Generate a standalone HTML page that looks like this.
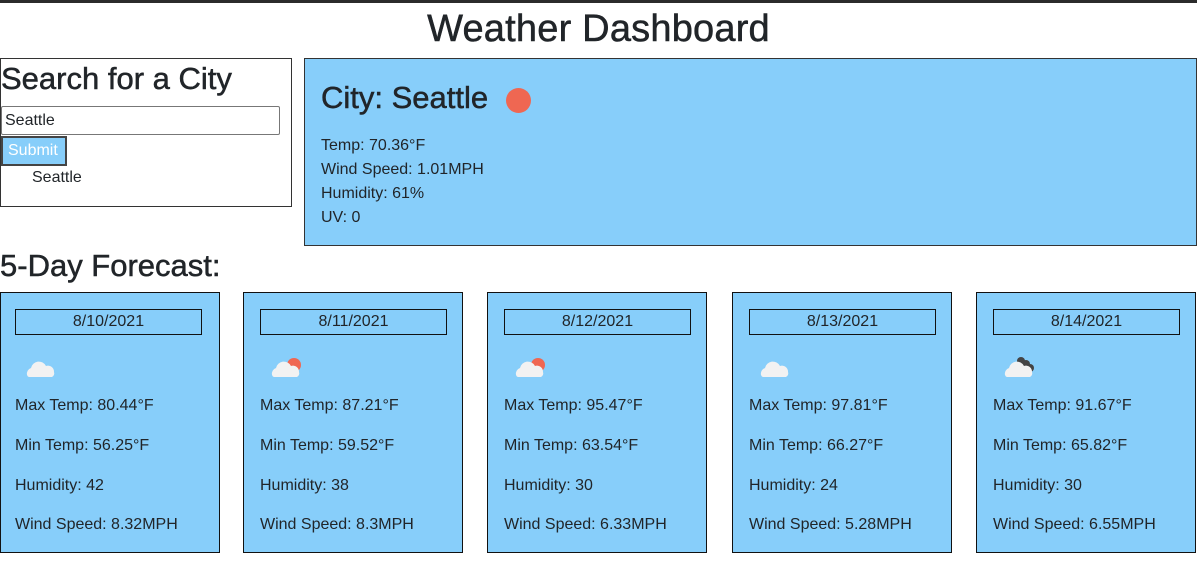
<!DOCTYPE html>
<html><head><style>
*{box-sizing:border-box;margin:0;padding:0}
body{width:1197px;height:561px;overflow:hidden;background:#fff;font-family:"Liberation Sans",Arial,sans-serif;color:#212529;position:relative}
.abs{position:absolute}
.topb{position:absolute;left:0;top:0;width:1197px;height:3px;background:#2b2b2b}
h1,h2,.fh{-webkit-text-stroke:0.5px #212529}
h1{position:absolute;left:0;width:1197px;top:7px;text-align:center;font-size:38px;font-weight:500;line-height:44px;letter-spacing:0.2px}
.search{left:0;top:58px;width:292px;height:149px;border:1px solid #333}
.search h2{font-size:31px;font-weight:500;line-height:40px;margin-top:0}
.inp{position:absolute;left:0;top:47px;width:279px;height:29px;border:1px solid #777;border-radius:2px;font-size:16px;padding:5px 3px}
.btn{position:absolute;left:0;top:77px;width:66px;height:30px;background:#87cefa;color:#fff;border:2px solid #444;font-size:16px;padding:4px 5px}
.hist{position:absolute;left:31px;top:110px;font-size:16px}
.cur{left:304px;top:58px;width:893px;height:188px;background:#87cefa;border:1px solid #333}
.cur h2{position:absolute;left:16px;top:21px;font-size:31px;font-weight:500}
.sun{position:absolute;left:201px;top:29px;width:25px;height:25px;border-radius:50%;background:#ef6752}
.cur .t{position:absolute;left:16px;top:75px;font-size:16px;line-height:24px}
.fh{left:0;top:248px;font-size:31px;font-weight:500}
.card{top:292px;width:220px;height:261px;background:#87cefa;border:1px solid #111;font-size:16px}
.date{position:absolute;left:14px;top:16px;width:187px;height:26px;border:1px solid #111;text-align:center;line-height:24px}
.ic{position:absolute;left:22px;top:60px}
.l{position:absolute;left:14px}
</style></head><body>
<div class="topb"></div>
<h1>Weather Dashboard</h1>
<div class="abs search"><h2>Search for a City</h2><div class="inp">Seattle</div><div class="btn">Submit</div><div class="hist">Seattle</div></div>
<div class="abs cur"><h2>City: Seattle</h2><div class="sun"></div><div class="t">Temp: 70.36°F<br>Wind Speed: 1.01MPH<br>Humidity: 61%<br>UV: 0</div></div>
<div class="abs fh">5-Day Forecast:</div>

<div class="abs card" style="left:0"><div class="date">8/10/2021</div>
<svg class="ic" width="40" height="28"><path d="M4 22a6 6 0 0 1 4-7a8 8 0 0 1 15-2a6 6 0 0 1 8 6a4 4 0 0 1-2 5H6a3 3 0 0 1-2-2z" fill="#f2f2f2"/></svg>
<div class="l" style="top:104px">Max Temp: 80.44°F</div><div class="l" style="top:144px">Min Temp: 56.25°F</div><div class="l" style="top:184px">Humidity: 42</div><div class="l" style="top:223px">Wind Speed: 8.32MPH</div></div>

<div class="abs card" style="left:243px"><div class="date" style="left:16px">8/11/2021</div>
<svg class="ic" width="40" height="28" style="left:24px"><circle cx="26" cy="12" r="7" fill="#ef6752"/><path d="M4 22a6 6 0 0 1 4-7a8 8 0 0 1 15-2a6 6 0 0 1 8 6a4 4 0 0 1-2 5H6a3 3 0 0 1-2-2z" fill="#f2f2f2"/></svg>
<div class="l" style="top:104px;left:16px">Max Temp: 87.21°F</div><div class="l" style="top:144px;left:16px">Min Temp: 59.52°F</div><div class="l" style="top:184px;left:16px">Humidity: 38</div><div class="l" style="top:223px;left:16px">Wind Speed: 8.3MPH</div></div>

<div class="abs card" style="left:487px"><div class="date" style="left:16px">8/12/2021</div>
<svg class="ic" width="40" height="28" style="left:24px"><circle cx="26" cy="12" r="7" fill="#ef6752"/><path d="M4 22a6 6 0 0 1 4-7a8 8 0 0 1 15-2a6 6 0 0 1 8 6a4 4 0 0 1-2 5H6a3 3 0 0 1-2-2z" fill="#f2f2f2"/></svg>
<div class="l" style="top:104px;left:16px">Max Temp: 95.47°F</div><div class="l" style="top:144px;left:16px">Min Temp: 63.54°F</div><div class="l" style="top:184px;left:16px">Humidity: 30</div><div class="l" style="top:223px;left:16px">Wind Speed: 6.33MPH</div></div>

<div class="abs card" style="left:732px"><div class="date" style="left:16px">8/13/2021</div>
<svg class="ic" width="40" height="28" style="left:24px"><path d="M4 22a6 6 0 0 1 4-7a8 8 0 0 1 15-2a6 6 0 0 1 8 6a4 4 0 0 1-2 5H6a3 3 0 0 1-2-2z" fill="#f2f2f2"/></svg>
<div class="l" style="top:104px;left:16px">Max Temp: 97.81°F</div><div class="l" style="top:144px;left:16px">Min Temp: 66.27°F</div><div class="l" style="top:184px;left:16px">Humidity: 24</div><div class="l" style="top:223px;left:16px">Wind Speed: 5.28MPH</div></div>

<div class="abs card" style="left:976px"><div class="date" style="left:16px">8/14/2021</div>
<svg class="ic" width="40" height="28" style="left:24px"><circle cx="20" cy="8" r="4" fill="#444"/><circle cx="25" cy="11" r="4" fill="#444"/><circle cx="29" cy="15" r="4" fill="#444"/><path d="M4 22a6 6 0 0 1 4-7a8 8 0 0 1 15-2a6 6 0 0 1 8 6a4 4 0 0 1-2 5H6a3 3 0 0 1-2-2z" fill="#f2f2f2"/></svg>
<div class="l" style="top:104px;left:16px">Max Temp: 91.67°F</div><div class="l" style="top:144px;left:16px">Min Temp: 65.82°F</div><div class="l" style="top:184px;left:16px">Humidity: 30</div><div class="l" style="top:223px;left:16px">Wind Speed: 6.55MPH</div></div>
</body></html>
